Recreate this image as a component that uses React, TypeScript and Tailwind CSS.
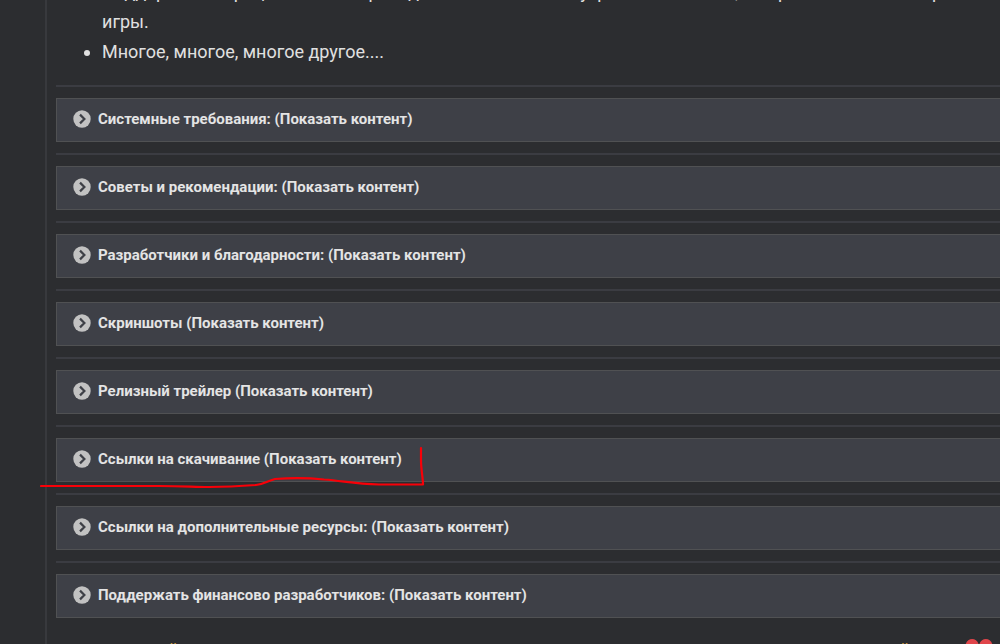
const SPOILERS = [
  { title: "Системные требования: (Показать контент)" },
  { title: "Советы и рекомендации: (Показать контент)" },
  { title: "Разработчики и благодарности: (Показать контент)" },
  { title: "Скриншоты (Показать контент)" },
  { title: "Релизный трейлер (Показать контент)" },
  { title: "Ссылки на скачивание (Показать контент)", marked: true },
  { title: "Ссылки на дополнительные ресурсы: (Показать контент)" },
  { title: "Поддержать финансово разработчиков: (Показать контент)" },
];

function ChevronBadge() {
  return (
    <svg className="mt-[3px] size-[18px] shrink-0" viewBox="0 0 18 18" aria-hidden="true">
      <circle cx="9" cy="9" r="8.7" fill="#c2c2c2" />
      <path d="M7 4.600 11.400 9 7 13.400" fill="none" stroke="#3e4047" strokeWidth="2.2" />
    </svg>
  );
}

// Freehand red underline over the downloads row
function RedMark() {
  return (
    <svg
      className="pointer-events-none absolute -left-4 top-0 h-[52px] w-[400px]"
      viewBox="1 0 400 52"
      fill="none"
      stroke="#f80008"
      strokeWidth="2.2"
      strokeLinecap="round"
      strokeLinejoin="round"
      aria-hidden="true"
    >
      <path d="M2 48H120C145 48 155 49 170 49C190 49 204 48 217 47C225 46 228 43 236 41C250 40 270 40 285 41.500C305 43 315 46 340 46.500H384C384 40 382 32 382 22V10" />
    </svg>
  );
}

function Spoiler({ title, marked }: { title: string; marked?: boolean }) {
  return (
    <div className="relative">
      <button
        type="button"
        className="flex h-11 w-full items-start gap-[7px] border border-r-0 border-[#505153] bg-[#3e4047] px-4 pt-2 text-left text-[15px] leading-6 font-bold text-[#e4e4e4]"
      >
        <ChevronBadge />
        <span>{title}</span>
      </button>
      {marked && <RedMark />}
    </div>
  );
}

export default function App() {
  return (
    <div className="h-screen overflow-hidden bg-[#2c2d30] pl-[45px] font-['Roboto',sans-serif] text-[#e0e0e0]">
      <main className="flow-root h-full border-l-2 border-[#38393d] pl-[9px]">
        <ul className="-mt-[23px] list-disc pl-[46px] text-[18px] leading-[30px]">
          <li>
            <span className="whitespace-nowrap">
              Поддержка операций и всей переводной части меню внутри самого меню, и версии смысла в мире
            </span>
            <br />
            игры.
          </li>
          <li>Многое, многое, многое другое....</li>
        </ul>
        <div className="mt-[18px]">
          {SPOILERS.map((item) => (
            <section key={item.title}>
              <hr className="mb-[11px] border-t-2 border-[#3b3c42]" />
              <div className="mb-[11px]">
                <Spoiler title={item.title} marked={item.marked} />
              </div>
            </section>
          ))}
        </div>
        <p className="mt-3 flex items-start pr-[6px] pl-28 text-[18px] leading-[30px] text-[#d29a3a]">
          <span className="mt-[5px]">й</span>
          <span className="mt-[5px] ml-auto pr-[54px]">й</span>
          <svg className="mt-2 h-6 w-[30px]" viewBox="0 0 30 24" fill="#e0454a" aria-hidden="true">
            <path d="M15 8C14-1 3-1 1.500 7C1 14 9 19 15 23C21 19 29 14 28.500 7C27-1 16-1 15 8Z" />
          </svg>
        </p>
      </main>
    </div>
  );
}
